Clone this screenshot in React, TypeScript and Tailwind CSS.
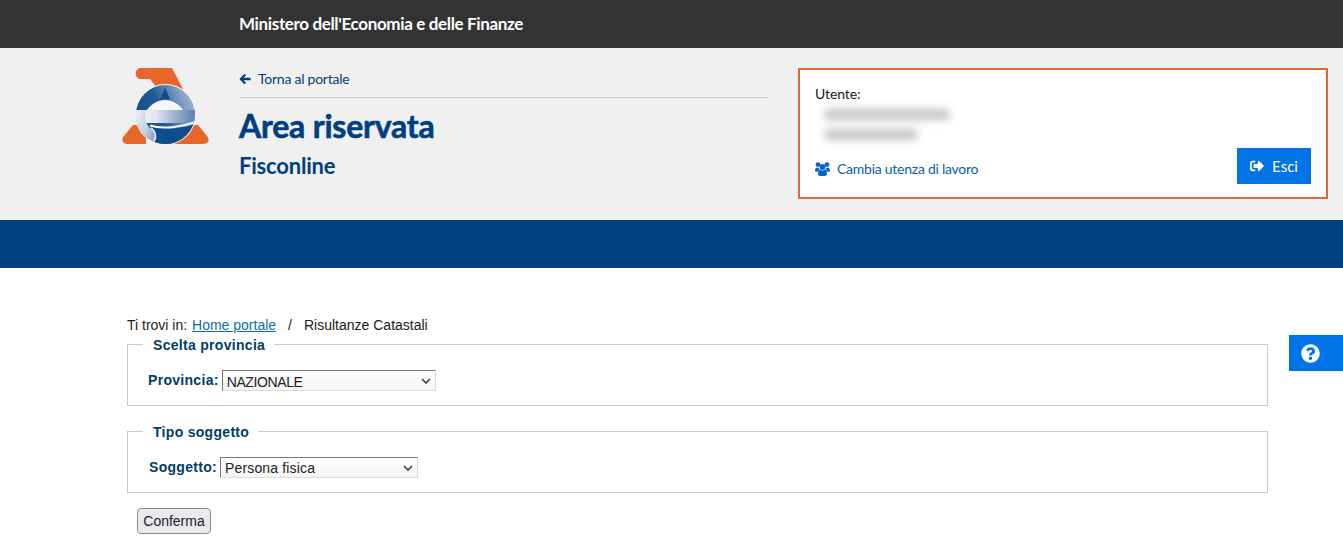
import React from 'react';
import { FaSignOutAlt, FaQuestionCircle } from 'react-icons/fa';

const Logo: React.FC = () => (
    <svg width="87" height="76" viewBox="0 0 87 76" className="shrink-0">
        <defs>
            <linearGradient id="ring" x1="0" y1="0.6" x2="1" y2="0.2">
                <stop offset="0" stopColor="#0f4c8a" />
                <stop offset="0.4" stopColor="#1d5a95" />
                <stop offset="0.75" stopColor="#7f9cc0" />
                <stop offset="1" stopColor="#b4c4d9" />
            </linearGradient>
            <linearGradient id="bar" x1="0" y1="0" x2="1" y2="0">
                <stop offset="0" stopColor="#f6f7fa" />
                <stop offset="0.35" stopColor="#dfe5ee" />
                <stop offset="0.7" stopColor="#8fa7c6" />
                <stop offset="1" stopColor="#4f79a9" />
            </linearGradient>
            <linearGradient id="bowl" x1="0" y1="0" x2="1" y2="0.3">
                <stop offset="0" stopColor="#f2f4f8" />
                <stop offset="0.6" stopColor="#c6d1e1" />
                <stop offset="1" stopColor="#8ba3c3" />
            </linearGradient>
            <clipPath id="disc">
                <circle cx="43.5" cy="46.5" r="29.5" />
            </clipPath>
        </defs>
        {/* orange A */}
        <path d="M19 0H50L61 21L36 21L28 11H19C12 11 12 0 19 0Z" fill="#e8662a" />
        <path d="M11 57H24V76H6C0 76 -1 71 2 68Z" fill="#e8662a" />
        <path d="M60 57H76L85 68C88 72 87 76 81 76H51Z" fill="#e8662a" />
        {/* e */}
        <circle cx="43.5" cy="46.5" r="30.5" fill="#f4f5f7" />
        <g clipPath="url(#disc)">
            <rect x="12" y="15" width="64" height="64" fill="url(#ring)" />
            <path d="M25 42C29 36 36 32 43 32C50 32 57 36 61 42Z" fill="#f6f7fa" />
            <path d="M43 20L48 31.5H38Z" fill="#104c8a" />
            <rect x="12" y="42" width="64" height="13" fill="url(#bar)" />
            <path d="M12 42H24C22 48 23 55 28 60C32 64 34 68 36 76H12Z" fill="url(#bowl)" />
            <path d="M29 59C40 63 60 61 76 55V78H30C35 72 35 65 29 59Z" fill="#0f4c8a" />
            <path d="M28 57.5C40 61.5 60 59.5 76 53" stroke="#f6f7fa" strokeWidth="2" fill="none" />
            <path d="M29 60C33 63 35 68 32 73" stroke="#dfe5ee" strokeWidth="2" fill="none" />
        </g>
    </svg>
);

const ArrowLeft: React.FC = () => (
    <svg width="12" height="12" viewBox="0 0 12 12" className="mt-[5px] fill-[#004080]">
        <path d="M5.4 .8L.4 6L5.4 11.2L7 9.7L4.6 7.3H11.6V4.7H4.6L7 2.3Z" />
    </svg>
);

const Users: React.FC = () => (
    <svg width="15" height="14" viewBox="0 0 15 14" className="fill-[#0066cc]">
        <circle cx="3" cy="2.6" r="2.4" />
        <circle cx="12" cy="2.6" r="2.4" />
        <path d="M0 9.6C0 7 .8 5.6 2.2 5.6C3 6.2 3.6 6.4 4.4 6.4C4 7.6 3.6 8.6 3 9.8Z" />
        <path d="M15 9.6C15 7 14.2 5.6 12.8 5.6C12 6.2 11.4 6.4 10.6 6.4C11 7.6 11.4 8.6 12 9.8Z" />
        <circle cx="7.5" cy="5" r="2.9" />
        <path d="M3 12C3 9.4 3.8 7.6 5 7.6C5.8 8.4 6.6 8.7 7.5 8.7C8.4 8.7 9.2 8.4 10 7.6C11.2 7.6 12 9.4 12 12C12 13.3 11.2 14 10 14H5C3.8 14 3 13.3 3 12Z" />
    </svg>
);

const Fieldset: React.FC<{ legend: string; label: string; value: string; labelClass: string; selectClass: string }> = ({
    legend,
    label,
    value,
    labelClass,
    selectClass
}) => (
    <fieldset className="border border-[#c8c8c8] h-[63px] pl-5">
        <legend className="ml-[-5px] pl-[10px] pr-[9px] pt-[2px] text-[14px] leading-[1px] font-bold tracking-[0.3px] text-[#003d6b]">
            {legend}
        </legend>
        <div className={`flex items-center mt-6 ${labelClass}`}>
            <label className="text-[14px] font-bold tracking-[0.3px] text-[#003d6b] mr-[3px]">{label}</label>
            <div className="relative">
                <select
                    defaultValue={value}
                    className={`block h-[21px] appearance-none pl-1 bg-gradient-to-b from-white to-[#f4f4f4] border border-[#dcdcdc] border-t-[#777] border-l-[#777] text-[14px] text-[#222] ${selectClass}`}
                >
                    <option>{value}</option>
                </select>
                <svg width="10" height="6" viewBox="0 0 10 6" className="absolute top-[8px] right-[5px]">
                    <path d="M1 1L5 5L9 1" stroke="#333" strokeWidth="1.5" fill="none" />
                </svg>
            </div>
        </div>
    </fieldset>
);

export default function App() {
    return (
        <div className="relative min-h-[559px] bg-white font-['Liberation_Sans',Arial,sans-serif]">
            {/* Top bar */}
            <div className="h-12 bg-[#333333] pl-[239px] flex items-center font-['Lato',sans-serif]">
                <span className="text-white text-[17px] font-bold tracking-[-0.35px]">Ministero dell'Economia e delle Finanze</span>
            </div>

            {/* Header */}
            <div className="h-[172px] bg-[#f0f0f0] pl-[122px] pt-5 flex items-start font-['Lato',sans-serif]">
                <Logo />
                <div className="ml-[30px] w-[529px]">
                    <div className="h-[30px] border-b border-[#d0d0d0] flex items-start gap-[7px]">
                        <ArrowLeft />
                        <a className="text-[14px] leading-[22px] tracking-[-0.25px] text-[#00407a]">Torna al portale</a>
                    </div>
                    <h1 className="mt-2 text-[32px] leading-[40px] font-bold text-[#004080] tracking-[-0.22px] [-webkit-text-stroke:0.6px_#004080]">Area riservata</h1>
                    <h2 className="mt-[6px] text-[22px] leading-[28px] font-bold text-[#004080] tracking-[-0.2px]">Fisconline</h2>
                </div>
                <div className="ml-[30px] w-[530px] h-[131px] border-2 border-[#dc6b32] bg-white px-[15px] flex justify-between items-end pb-[13px]">
                    <div className="self-stretch pt-[14px]">
                        <div className="text-[14px] leading-5 tracking-[-0.1px] text-[#1a1a1a]">Utente:</div>
                        <div className="mt-[-1px] ml-1 w-[138px] h-[43px] flex flex-col justify-center gap-[9px] pl-[6px]">
                            <div className="h-[11px] w-[124px] bg-[#c4c4c4] blur-[4px]"></div>
                            <div className="h-[11px] w-[92px] bg-[#c4c4c4] blur-[4px]"></div>
                        </div>
                        <a className="mt-[13px] flex items-center gap-[7px] text-[14px] leading-5 tracking-[-0.25px] text-[#0a5ea8]">
                            <Users />
                            Cambia utenza di lavoro
                        </a>
                    </div>
                    <button className="w-[74px] h-9 bg-[#0073e6] text-white text-[15px] flex items-center justify-center gap-2">
                        <FaSignOutAlt className="w-[14px] h-[14px]" />
                        Esci
                    </button>
                </div>
            </div>

            {/* Blue band */}
            <div className="h-12 bg-[#004080]"></div>

            {/* Content */}
            <div className="pl-[127px] w-[1268px] pt-[49px]">
                <div className="text-[14px] leading-4 text-[#1a1a1a] flex">
                    <span>Ti trovi in:&nbsp;</span>
                    <a className="ml-px text-[#0a6ea8] underline">Home portale</a>
                    <span className="mx-3">/</span>
                    <span>Risultanze Catastali</span>
                </div>
                <div className="mt-[10px]">
                    <Fieldset
                        legend="Scelta provincia"
                        label="Provincia:"
                        value="NAZIONALE"
                        labelClass=""
                        selectClass="w-[214px] pt-px tracking-[-0.4px]"
                    />
                </div>
                <div className="mt-6">
                    <Fieldset
                        legend="Tipo soggetto"
                        label="Soggetto:"
                        value="Persona fisica"
                        labelClass="ml-px"
                        selectClass="w-[198px] tracking-[0.15px]"
                    />
                </div>
                <button className="mt-[15px] ml-[10px] w-[74px] h-[26px] rounded-[4px] border border-[#8a8a8a] bg-[#e9e9f0] text-[14px] text-[#222]">
                    Conferma
                </button>
            </div>

            {/* Help tab */}
            <div className="absolute left-[1289px] top-[335px] w-[54px] h-9 bg-[#0073e6] flex items-center pl-3">
                <FaQuestionCircle className="w-[19px] h-[19px] text-white" />
            </div>
        </div>
    );
}
